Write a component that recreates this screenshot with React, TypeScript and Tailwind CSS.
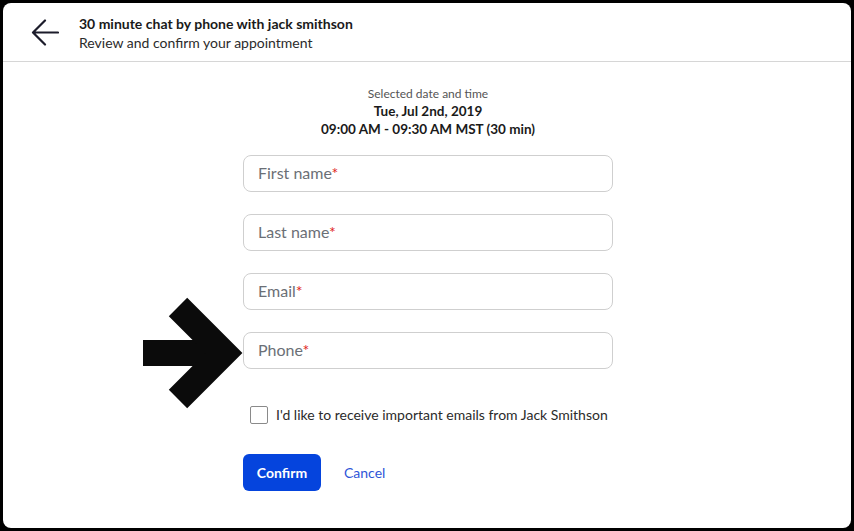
import { useState } from "react"

const font = { fontFamily: "Lato, 'Noto Sans', sans-serif" }

function Field({ label }: { label: string }) {
  return (
    <div className="h-[37px] w-full rounded-lg border border-[#cfcfcf] bg-white px-[14px] pb-[2px] flex items-center">
      <span className="text-[16px] text-[#6b6f76]">
        {label}
        <span className="text-[#e0261b]">*</span>
      </span>
    </div>
  )
}

function BigArrow() {
  return (
    <svg className="absolute left-[137px] top-[292px]" width="110" height="118" viewBox="0 0 110 118">
      <path d="M3 58H80" stroke="#0b0b0b" strokeWidth="26" strokeLinecap="butt" />
      <path d="M38 12L84 58L38 104" fill="none" stroke="#0b0b0b" strokeWidth="26" strokeLinejoin="miter" strokeMiterlimit="4" />
    </svg>
  )
}

export default function App() {
  const [checked, setChecked] = useState(false)

  return (
    <div className="w-[854px] h-[531px] bg-black p-[3px]" style={font}>
      <div className="relative h-full w-full rounded-lg bg-white overflow-hidden">
        <div className="h-[59px] pt-[2px] border-b border-[#d6d6d6] flex items-center">
          <svg className="ml-[28px] mr-[20px]" width="28" height="28" viewBox="0 0 28 28">
            <path d="M27 13.5H2.5M14 1.5L2 13.5L14 25.5" fill="none" stroke="#1c1c2b" strokeWidth="2.2" strokeLinecap="round" strokeLinejoin="round" />
          </svg>
          <div className="flex flex-col leading-[19px]">
            <span className="text-[14px] font-bold text-[#1a1a1a]">30 minute chat by phone with jack smithson</span>
            <span className="text-[14px] text-[#2b2b2b]">Review and confirm your appointment</span>
          </div>
        </div>

        <div className="pl-[2px]">
          <div className="mx-auto w-[370px] pt-[23px] flex flex-col">
            <div className="flex flex-col items-center">
              <span className="text-[12px] leading-[17px] text-[#555]">Selected date and time</span>
              <span className="text-[13.5px] leading-[18px] font-bold text-[#1a1a1a]">Tue, Jul 2nd, 2019</span>
              <span className="text-[13.5px] leading-[18px] font-bold text-[#1a1a1a]">09:00 AM - 09:30 AM MST (30 min)</span>
            </div>

            <div className="mt-[17px] flex flex-col gap-[22px]">
              <Field label="First name" />
              <Field label="Last name" />
              <Field label="Email" />
              <Field label="Phone" />
            </div>

            <label className="mt-[36px] ml-[7px] flex items-center gap-[8px] cursor-pointer">
              <input
                type="checkbox"
                checked={checked}
                onChange={() => setChecked(!checked)}
                className="h-[18px] w-[18px] appearance-none rounded-[2px] border border-[#8a8a8a] bg-white"
              />
              <span className="text-[14px] leading-[20px] text-[#2b2b2b]">I'd like to receive important emails from Jack Smithson</span>
            </label>

            <div className="mt-[29px] flex items-center gap-[23px]">
              <button className="h-[37px] w-[78px] rounded-md bg-[#0544dd] pb-[1px] text-[14px] font-bold text-white">Confirm</button>
              <button className="text-[14px] text-[#2e55d8]">Cancel</button>
            </div>
          </div>
        </div>

        <BigArrow />
      </div>
    </div>
  )
}
